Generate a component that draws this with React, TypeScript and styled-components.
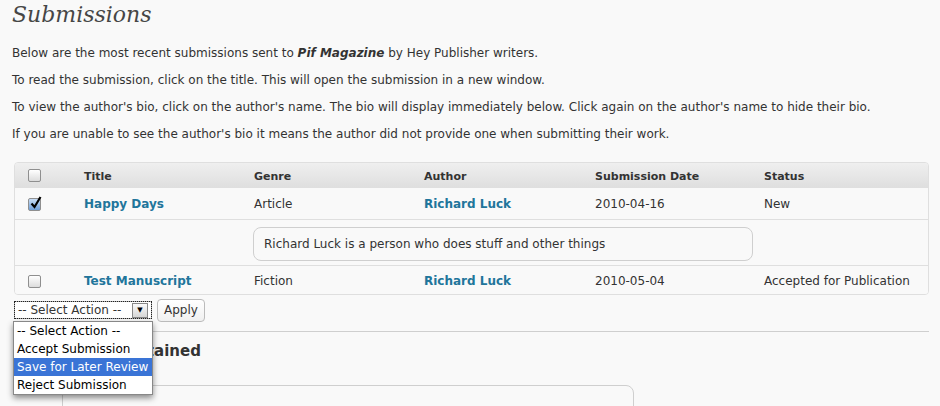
import React from 'react';
import styled, { createGlobalStyle } from 'styled-components';

// --- Global ---

const GlobalStyle = createGlobalStyle`
  html, body {
    margin: 0;
    padding: 0;
    background: #f9f9f9;
  }
  body {
    font-family: "DejaVu Sans", "Noto Sans", sans-serif;
    font-size: 12px;
    color: #333;
  }
`;

// --- Layout ---

const Wrap = styled.main`
  padding: 0 11px 0 12px;
  width: 917px;
`;

const PageTitle = styled.h2`
  margin: 0;
  padding: 2px 0 0;
  height: 35px;
  font-family: "DejaVu Serif", "Liberation Serif", serif;
  font-style: italic;
  font-weight: normal;
  font-size: 22px;
  color: #464646;
`;

const Intro = styled.p`
  margin: 0;
  height: 27px;
  line-height: 27px;
  font-size: 12px;
  color: #333;
`;

const IntroBlock = styled.div`
  margin-top: 3px;
  margin-bottom: 14px;
`;

// --- Table ---

const TableBox = styled.table`
  width: 915px;
  margin-left: 2px;
  border: 1px solid #dfdfdf;
  border-radius: 4px;
  border-spacing: 0;
  background: #f9f9f9;
  table-layout: fixed;
  overflow: hidden;
`;

const HeadCell = styled.th<{ $w?: number }>`
  box-sizing: border-box;
  width: ${(p) => (p.$w ? `${p.$w}px` : 'auto')};
  height: 25px;
  padding: 2px 0 0 8px;
  text-align: left;
  font-size: 11px;
  font-weight: bold;
  color: #333;
  background: linear-gradient(#efefef, #dfdfdf);
  border-bottom: 1px solid #dfdfdf;
`;

const Row = styled.tr<{ $h: number }>`
  height: ${(p) => p.$h}px;
`;

const Cell = styled.td<{ $last?: boolean }>`
  box-sizing: border-box;
  padding: 1px 0 0 8px;
  font-size: 12px;
  color: #333;
  white-space: nowrap;
  border-bottom: ${(p) => (p.$last ? 'none' : '1px solid #dfdfdf')};
  background: #f9f9f9;
`;

const CheckCell = styled(Cell)`
  padding: 1px 0 0 13px;
`;

const CheckHead = styled(HeadCell)`
  padding: 1px 0 0 13px;
`;

const Link = styled.a`
  color: #21759b;
  font-weight: bold;
  text-decoration: none;
`;

const BioBox = styled.div`
  width: 488px;
  height: 32px;
  margin: 1px 0 0 -1px;
  padding-left: 10px;
  box-sizing: content-box;
  display: flex;
  align-items: center;
  border: 1px solid #cfcfcf;
  border-radius: 8px;
  background: #f9f9f9;
`;

const Box = styled.span<{ $checked?: boolean }>`
  display: inline-flex;
  align-items: center;
  justify-content: center;
  width: 11px;
  height: 11px;
  border: 1px solid #8f8f8f;
  border-radius: 2px;
  background: ${(p) =>
    p.$checked ? 'linear-gradient(#c8ddf5, #6f9fd8)' : 'linear-gradient(#ffffff, #dcdcdc)'};
  vertical-align: middle;
  position: relative;
`;

const CheckMark = styled.svg`
  position: absolute;
  left: 1px;
  top: -3px;
`;

function Checkbox({ checked }: { checked?: boolean }) {
  return (
    <Box $checked={checked}>
      {checked && (
        <CheckMark width="12" height="13" viewBox="0 0 12 13">
          <path d="M1.5 7.5 L4.5 11 L10.5 1" fill="none" stroke="#000" strokeWidth="2.2" />
        </CheckMark>
      )}
    </Box>
  );
}

// --- Actions ---

const ActionBar = styled.div`
  position: relative;
  display: flex;
  align-items: center;
  gap: 5px;
  margin: 3px 0 0 2px;
  height: 24px;
`;

const SelectBox = styled.div`
  width: 138px;
  height: 18px;
  display: flex;
  align-items: center;
  justify-content: space-between;
  border: 1px solid #aaa;
  outline: 1px dotted #222;
  outline-offset: -1px;
  background: #fff;
  font-size: 12px;
  padding-left: 3px;
  box-sizing: border-box;
`;

const ArrowBtn = styled.span`
  width: 14px;
  height: 13px;
  margin-right: 3px;
  border: 1px solid #888;
  background: linear-gradient(#fafafa, #d6d6d6);
  display: flex;
  align-items: center;
  justify-content: center;
  font-size: 7px;
  color: #000;
`;

const ApplyButton = styled.button`
  height: 23px;
  padding: 0 6px;
  border: 1px solid #bbb;
  border-radius: 4px;
  background: linear-gradient(#ffffff, #f0f0f0);
  font-family: "DejaVu Sans", sans-serif;
  font-size: 12px;
  color: #333;
`;

const Menu = styled.ul`
  position: absolute;
  left: -1px;
  top: 23px;
  width: 138px;
  margin: 0;
  padding: 0;
  list-style: none;
  background: #fff;
  border: 1px solid #888;
  box-shadow: 0 3px 6px rgba(0, 0, 0, 0.45);
  z-index: 5;
`;

const MenuItem = styled.li<{ $active?: boolean }>`
  height: 18px;
  line-height: 18px;
  padding-left: 3px;
  font-size: 12px;
  color: ${(p) => (p.$active ? '#fff' : '#000')};
  background: ${(p) => (p.$active ? '#3a74d6' : 'transparent')};
`;

// --- Section below ---

const Divider = styled.hr`
  margin: 9px 0 0 2px;
  width: 915px;
  border: 0;
  border-top: 1px solid #cfcfcf;
`;

const SectionTitle = styled.h3`
  margin: 10px 0 0 2px;
  font-size: 15px;
  font-weight: bold;
  color: #333;
`;

const NoteBox = styled.div`
  margin: 25px 0 0 50px;
  width: 570px;
  height: 40px;
  border: 1px solid #cfcfcf;
  border-radius: 8px;
`;

export default function App() {
  return (
    <>
      <GlobalStyle />
      <Wrap>
        <PageTitle>Submissions</PageTitle>
        <IntroBlock>
          <Intro>
            Below are the most recent submissions sent to <b><i>Pif Magazine</i></b> by Hey Publisher writers.
          </Intro>
          <Intro>To read the submission, click on the title. This will open the submission in a new window.</Intro>
          <Intro>
            To view the author's bio, click on the author's name. The bio will display immediately below. Click again on
            the author's name to hide their bio.
          </Intro>
          <Intro>If you are unable to see the author's bio it means the author did not provide one when submitting their work.</Intro>
        </IntroBlock>

        <TableBox>
          <thead>
            <tr>
              <CheckHead $w={61}>
                <Checkbox />
              </CheckHead>
              <HeadCell $w={170}>Title</HeadCell>
              <HeadCell $w={170}>Genre</HeadCell>
              <HeadCell $w={171}>Author</HeadCell>
              <HeadCell $w={169}>Submission Date</HeadCell>
              <HeadCell>Status</HeadCell>
            </tr>
          </thead>
          <tbody>
            <Row $h={32}>
              <CheckCell>
                <Checkbox checked />
              </CheckCell>
              <Cell><Link href="#">Happy Days</Link></Cell>
              <Cell>Article</Cell>
              <Cell><Link href="#">Richard Luck</Link></Cell>
              <Cell>2010-04-16</Cell>
              <Cell>New</Cell>
            </Row>
            <Row $h={46}>
              <Cell />
              <Cell />
              <Cell colSpan={3}>
                <BioBox>Richard Luck is a person who does stuff and other things</BioBox>
              </Cell>
              <Cell />
            </Row>
            <Row $h={28}>
              <CheckCell $last>
                <Checkbox />
              </CheckCell>
              <Cell $last><Link href="#">Test Manuscript</Link></Cell>
              <Cell $last>Fiction</Cell>
              <Cell $last><Link href="#">Richard Luck</Link></Cell>
              <Cell $last>2010-05-04</Cell>
              <Cell $last>Accepted for Publication</Cell>
            </Row>
          </tbody>
        </TableBox>

        <ActionBar>
          <SelectBox>
            -- Select Action --
            <ArrowBtn>▼</ArrowBtn>
          </SelectBox>
          <ApplyButton>Apply</ApplyButton>
          <Menu>
            <MenuItem>-- Select Action --</MenuItem>
            <MenuItem>Accept Submission</MenuItem>
            <MenuItem $active>Save for Later Review</MenuItem>
            <MenuItem>Reject Submission</MenuItem>
          </Menu>
        </ActionBar>

        <Divider />
        <SectionTitle>Submissions Retained</SectionTitle>
        <NoteBox />
      </Wrap>
    </>
  );
}
